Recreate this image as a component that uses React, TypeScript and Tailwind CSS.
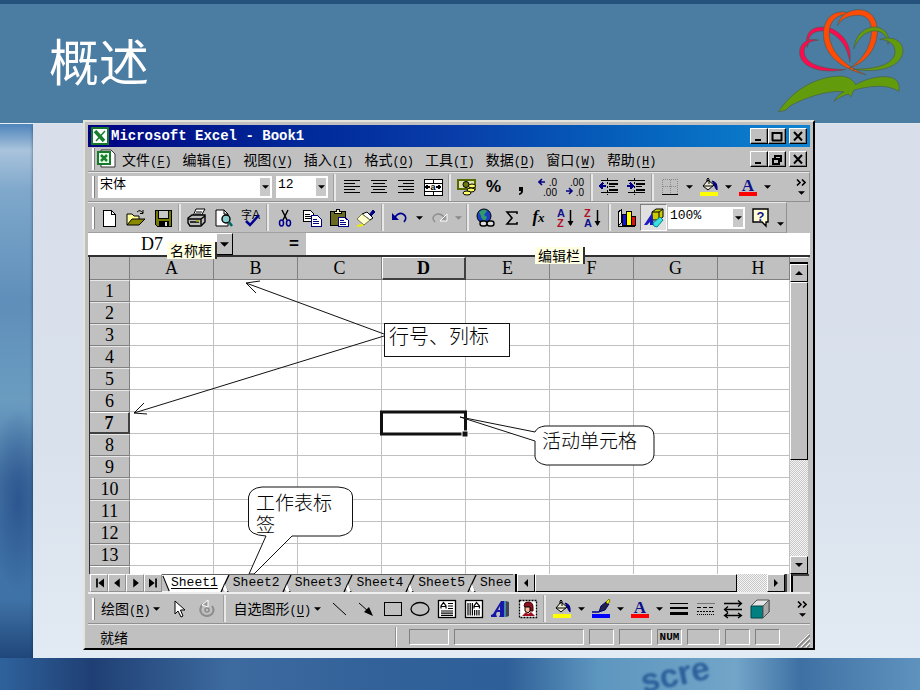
import React from "react";

const UI = "font-['Liberation_Mono','Noto_Sans_CJK_SC',monospace]";
const SERIF = "font-['Liberation_Serif','Noto_Sans_CJK_SC',serif]";
const CJK = "font-['Noto_Sans_CJK_SC',sans-serif]";
const RAISED = "border border-t-white border-l-white border-r-black border-b-black bg-[#c0c0c0]";
const SUNKEN = "border border-t-[#808080] border-l-[#808080] border-r-white border-b-white";

type IconProps = { children: React.ReactNode; soft?: boolean };
function Icon({ children, soft }: IconProps) {
  return (
    <svg viewBox="0 0 20 20" className="size-5 shrink-0" fill="none" stroke="#000" shapeRendering={soft ? "auto" : "crispEdges"}>
      {children}
    </svg>
  );
}

function Tool({ label, children, pressed }: { label: string; children: React.ReactNode; pressed?: boolean }) {
  return (
    <button
      type="button"
      aria-label={label}
      className={
        pressed
          ? "flex h-[27px] w-[27px] shrink-0 items-center justify-center border border-t-[#808080] border-l-[#808080] border-r-white border-b-white bg-[#e0e0e0]"
          : "flex h-[27px] w-[27px] shrink-0 items-center justify-center"
      }
    >
      {children}
    </button>
  );
}

function Drop({ label, dim }: { label: string; dim?: boolean }) {
  return (
    <button type="button" aria-label={label} className="flex h-[27px] w-3 shrink-0 items-center justify-center">
      <svg viewBox="0 0 8 4" className="h-1 w-[7px]">
        <path d="M0 0H8L4 4Z" fill={dim ? "#8a8a8a" : "#000"} />
      </svg>
    </button>
  );
}

const Sep = () => <span className="mx-[2px] h-[27px] w-[3px] shrink-0 border-l border-l-[#a0a0a0] bg-[#e8e8e8]" />;
const Grip = () => <span className="ml-1 h-[22px] w-[3px] shrink-0 border-r border-r-[#808080] bg-white" />;

function More() {
  return (
    <button type="button" aria-label="其他按钮" className="ml-auto mr-[2px] flex h-[24px] w-3 flex-col items-center justify-center gap-[5px]">
      <svg viewBox="0 0 10 6" className="h-[7px] w-[10px]" fill="none" stroke="#000" strokeWidth="1.6">
        <path d="M1 0L4 3L1 6M6 0L9 3L6 6" />
      </svg>
      <svg viewBox="0 0 8 4" className="h-1 w-[7px]">
        <path d="M0 0H8L4 4Z" />
      </svg>
    </button>
  );
}

function Combo({ label, value, width, offset }: { label: string; value: string; width: string; offset?: string }) {
  return (
    <div className={`flex h-[22px] shrink-0 items-stretch bg-white ${width} ${offset ?? ""}`}>
      <select aria-label={label} className={`min-w-0 flex-1 appearance-none bg-white pl-[2px] pb-1 text-[13px] leading-4 outline-none ${UI}`}>
        <option>{value}</option>
      </select>
      <span className="m-[2px] ml-0 flex w-[10px] items-center justify-center bg-[#c8c8c8]">
        <svg viewBox="0 0 8 4" className="h-1 w-[7px]">
          <path d="M0 0H8L4 4Z" />
        </svg>
      </span>
    </div>
  );
}

function WinButton({ label, d, gap }: { label: string; d: string; gap?: boolean }) {
  return (
    <button
      type="button"
      aria-label={label}
      className={`flex h-4 w-[18px] shrink-0 items-center justify-center shadow-[inset_-1px_-1px_0_#808080] ${RAISED} ${gap ? "ml-[3px]" : ""}`}
    >
      <svg viewBox="0 0 12 11" className="h-[11px] w-3" fill="none" stroke="#000" strokeWidth="2">
        <path d={d} />
      </svg>
    </button>
  );
}

const MIN = "M2 9H8";
const MAX = "M1 2H11M1.5 1V10M10.5 1V10M1 9.5H11";
const RESTORE = "M4 2H10V7H8M4 1V4M2 5H8V10H2V4";
const CLOSE = "M2 1L10 9.500M10 1L2 9.500";

const menus: [string, string][] = [
  ["文件", "F"],
  ["编辑", "E"],
  ["视图", "V"],
  ["插入", "I"],
  ["格式", "O"],
  ["工具", "T"],
  ["数据", "D"],
  ["窗口", "W"],
  ["帮助", "H"],
];

function MenuText({ text, hot }: { text: string; hot: string }) {
  return (
    <span className={`whitespace-nowrap text-[12px] leading-5 ${UI}`}>
      <span className="text-[14px]">{text}</span>(<u className="underline-offset-2">{hot}</u>)
    </span>
  );
}

const Bucket = () => (
  <Icon soft>
    <rect x="1" y="15" width="18" height="4" fill="#ff0" stroke="none" />
    <path d="M4 9L9 3L15 8L9 13Z" fill="#e8e8d0" />
    <path d="M8 5V2Q9 0 10 2V7M4 9H14" />
    <path d="M13 4Q19 5 18 13Q16 11 15 7Z" fill="#000080" stroke="#000080" />
  </Icon>
);

const FontColor = () => (
  <Icon>
    <rect x="1" y="15" width="18" height="4" fill="#f00" stroke="none" />
    <text x="10" y="14" textAnchor="middle" fontFamily="Liberation Serif" fontWeight="700" fontSize="17" fill="#10108a" stroke="none">
      A
    </text>
  </Icon>
);

function AlignIcon({ lines }: { lines: string }) {
  return (
    <Icon>
      <path d={lines} strokeWidth="1" transform="translate(0 .5)" />
    </Icon>
  );
}

function SortIcon({ top, bottom, topColor, bottomColor }: { top: string; bottom: string; topColor: string; bottomColor: string }) {
  return (
    <Icon soft>
      <g fontFamily="Liberation Sans" fontWeight="700" fontSize="11" stroke="none">
        <text x="1" y="9" fill={topColor}>{top}</text>
        <text x="1" y="19" fill={bottomColor}>{bottom}</text>
      </g>
      <path d="M14.500 2V17" strokeWidth="1.500" />
      <path d="M11.500 13H17.500L14.500 18Z" fill="#000" stroke="none" />
    </Icon>
  );
}

function DecimalIcon({ top, bottom, arrow }: { top: string; bottom: string; arrow: string }) {
  return (
    <Icon soft>
      <g fontFamily="Liberation Sans" fontSize="10" fill="#000" stroke="none">
        <text x="19" y="9" textAnchor="end">{top}</text>
        <text x="19" y="19" textAnchor="end">{bottom}</text>
      </g>
      <path d={arrow} stroke="#000080" strokeWidth="1.600" />
    </Icon>
  );
}

function FormatBar() {
  return (
    <div role="toolbar" aria-label="格式" className="flex h-[30px] items-center border-b border-b-[#909090] border-t border-t-[#e8e8e8] border-r border-r-[#909090]">
      <Grip />
      <Combo label="字体" value="宋体" width="w-[174px]" offset="ml-[3px]" />
      <Combo label="字号" value="12" width="w-[52px]" offset="ml-1 mr-[3px]" />
      <Sep />
      <Tool label="左对齐"><AlignIcon lines="M2 3H18M2 6H13M2 9H18M2 12H13M2 15H18" /></Tool>
      <Tool label="居中"><AlignIcon lines="M2 3H18M4 6H16M2 9H18M4 12H16M2 15H18" /></Tool>
      <Tool label="右对齐"><AlignIcon lines="M2 3H18M7 6H18M2 9H18M7 12H18M2 15H18" /></Tool>
      <Tool label="合并及居中">
        <Icon>
          <rect x="1" y="2" width="18" height="16" fill="#fff" />
          <path d="M1 6H19M1 14H19M10 2V6M10 14V18" />
          <path d="M2 10H7M13 10H18M4 8V12M16 8V12" strokeWidth="1.500" />
          <text x="10" y="13" textAnchor="middle" fontFamily="Liberation Sans" fontWeight="700" fontSize="9" fill="#000" stroke="none">a</text>
        </Icon>
      </Tool>
      <Sep />
      <Tool label="货币样式">
        <Icon soft>
          <rect x="1" y="3" width="17" height="9" fill="#e0e0b0" stroke="#556b00" strokeWidth="2" />
          <circle cx="9" cy="7.500" r="3" fill="#6b7a10" />
          <ellipse cx="15" cy="9" rx="3.500" ry="2" fill="#ff6" />
          <ellipse cx="14" cy="13" rx="4" ry="2" fill="#ff6" />
          <ellipse cx="10" cy="16" rx="4" ry="2" fill="#ff6" />
        </Icon>
      </Tool>
      <Tool label="百分比样式"><span className="font-['Liberation_Sans'] text-[17px] font-bold leading-5">%</span></Tool>
      <Tool label="千位分隔样式">
        <Icon soft><path d="M8 10H12V14Q12 17 8 18V16.500Q10 16 10 14H8Z" fill="#000" stroke="none" /></Icon>
      </Tool>
      <Tool label="增加小数位数"><DecimalIcon top=".0" bottom=".00" arrow="M1 5H7M4 2L1 5L4 8" /></Tool>
      <Tool label="减少小数位数"><DecimalIcon top=".00" bottom=".0" arrow="M1 14H7M4 11L7 14L4 17" /></Tool>
      <Sep />
      <Tool label="减少缩进量">
        <Icon>
          <path d="M2 3.500H19M10 9.500H16M2 15.500H19" />
          <path d="M10 6.500H19M10 12.500H19" strokeWidth="2" />
          <path d="M8.500 1V18" strokeDasharray="2 2" />
          <path d="M1 9H7M4 6L1 9L4 12" stroke="#000080" strokeWidth="1.500" />
        </Icon>
      </Tool>
      <Tool label="增加缩进量">
        <Icon>
          <path d="M2 3.500H19M10 9.500H16M2 15.500H19" />
          <path d="M10 6.500H19M10 12.500H19" strokeWidth="2" />
          <path d="M8.500 1V18" strokeDasharray="2 2" />
          <path d="M1 9H7M4 6L7 9L4 12" stroke="#000080" strokeWidth="1.500" />
        </Icon>
      </Tool>
      <Sep />
      <Tool label="边框">
        <Icon>
          <path d="M2.500 2.500H17.500V17M2.500 2.500V17M10 3V17M3 9.500H17" stroke="#888" strokeDasharray="1 1" />
          <path d="M2 17.500H18" />
        </Icon>
      </Tool>
      <Drop label="边框选项" />
      <Tool label="填充颜色"><Bucket /></Tool>
      <Drop label="填充颜色选项" />
      <Tool label="字体颜色"><FontColor /></Tool>
      <Drop label="字体颜色选项" />
      <More />
    </div>
  );
}

function StandardBar() {
  return (
    <div role="toolbar" aria-label="常用" className="mr-[23px] flex h-[31px] items-center border-r border-r-[#909090] border-b border-b-[#a0a0a0] border-t border-t-[#e8e8e8]">
      <Grip />
      <Tool label="新建"><Icon><path d="M4 2H12L16 6V18H4Z" fill="#fff" /><path d="M12 2V6H16" /></Icon></Tool>
      <Tool label="打开">
        <Icon soft>
          <path d="M1 17V6H6L8 8H13V11" fill="#ff9" />
          <path d="M1 17L6 11H19L13 17Z" fill="#8a8a00" />
          <path d="M11 4Q14 1 17 5M17 2V5.500H14" />
        </Icon>
      </Tool>
      <Tool label="保存">
        <Icon><path d="M2 2H18V18H4L2 16Z" fill="#777a00" /><rect x="5" y="2" width="10" height="8" fill="#c8c8c8" /><rect x="6" y="13" width="9" height="5" fill="#000" /><rect x="12" y="14" width="2" height="4" fill="#ddd" stroke="none" /></Icon>
      </Tool>
      <Sep />
      <Tool label="打印">
        <Icon soft>
          <path d="M6 8L9 1H18L14 8Z" fill="#fff" />
          <path d="M9 4H15M8 6H14" />
          <path d="M1 10L5 7H18V14L14 18H3L1 15Z" fill="#bbb" strokeWidth="1.400" />
          <path d="M1 11H14V17M14 11L18 8M3 14H12" strokeWidth="1.400" />
          <path d="M9 13H12" stroke="#aa0" strokeWidth="1.500" />
        </Icon>
      </Tool>
      <Tool label="打印预览">
        <Icon soft>
          <path d="M2 2H10L14 6V18H2Z" fill="#fff" />
          <path d="M10 2V6H14" />
          <circle cx="12" cy="11" r="4" fill="#8cc" strokeWidth="1.400" />
          <path d="M15 14L18 18" strokeWidth="2.500" stroke="#066" />
        </Icon>
      </Tool>
      <Tool label="拼写检查">
        <Icon soft>
          <g fill="#000" stroke="none">
            <text x="0" y="11" fontFamily="Noto Sans CJK SC" fontSize="11">字</text>
            <text x="11" y="11" fontFamily="Liberation Sans" fontSize="12">A</text>
          </g>
          <path d="M5 13L9 17L18 7" stroke="#000090" strokeWidth="2.500" />
        </Icon>
      </Tool>
      <Sep />
      <Tool label="剪切">
        <Icon soft>
          <path d="M7 2L12 12M13 2L8 12" strokeWidth="1.500" />
          <ellipse cx="6.500" cy="15" rx="2" ry="3" stroke="#000090" strokeWidth="1.500" />
          <ellipse cx="13.500" cy="15" rx="2" ry="3" stroke="#000090" strokeWidth="1.500" />
        </Icon>
      </Tool>
      <Tool label="复制">
        <Icon>
          <path d="M1 2H8L11 5V13H1Z" fill="#fff" /><path d="M3 6H8M3 8H9M3 10H9" />
          <path d="M9 7H15L19 11V18H9Z" fill="#fff" stroke="#000080" /><path d="M11 11H15M11 13H17M11 15H17" stroke="#000080" />
        </Icon>
      </Tool>
      <Tool label="粘贴">
        <Icon>
          <rect x="1" y="3" width="15" height="14" fill="#6a6a20" />
          <path d="M5 5V3H7V1H10V3H12V5Z" fill="#ffc" />
          <path d="M9 9H15L19 12V18H9Z" fill="#fff" stroke="#000080" /><path d="M11 12H15M11 14H17M11 16H17" stroke="#000080" />
        </Icon>
      </Tool>
      <Tool label="格式刷">
        <Icon soft>
          <path d="M13 7L17 2L19 4L15 8Z" fill="#000080" stroke="#000080" />
          <path d="M6 6L11 4L17 10L14 12Z" fill="#fff" />
          <path d="M6 6L1 11L8 17L14 12Z" fill="#ffc" stroke="#774" />
          <path d="M1 18L7 17" stroke="#ee0" strokeWidth="2" />
        </Icon>
      </Tool>
      <Sep />
      <Tool label="撤消">
        <Icon soft><path d="M5 9Q9 4 13 6Q18 9 14 14" stroke="#000090" strokeWidth="1.600" /><path d="M2 5V12H9Z" fill="#000090" stroke="none" /></Icon>
      </Tool>
      <Drop label="撤消列表" />
      <Tool label="恢复">
        <Icon soft><path d="M16 10Q11 4 6 7Q2 10 6 14" stroke="#8c8c8c" strokeWidth="1.400" /><path d="M18 6V13H11Z" fill="#999" stroke="#fff" /></Icon>
      </Tool>
      <Drop label="恢复列表" dim />
      <Sep />
      <Tool label="插入超链接">
        <Icon soft>
          <circle cx="9" cy="8" r="7" fill="#1b3fc0" />
          <path d="M4 4Q9 0 12 3L9 7L12 9L10 13Q6 11 6 8Z" fill="#2f9a6a" stroke="none" />
          <rect x="5" y="13" width="7" height="5" rx="2.500" fill="#ddd" strokeWidth="1.400" />
          <rect x="12" y="13" width="7" height="5" rx="2.500" fill="#ddd" strokeWidth="1.400" />
        </Icon>
      </Tool>
      <Tool label="自动求和"><Icon soft><path d="M15 6V4H5L10 10L5 16H15V14" strokeWidth="1.600" /></Icon></Tool>
      <Tool label="粘贴函数"><span className="font-['Liberation_Serif'] text-[17px] font-bold italic leading-5">f<span className="text-[13px]">x</span></span></Tool>
      <Tool label="升序排序"><SortIcon top="A" bottom="Z" topColor="#10108a" bottomColor="#b0102a" /></Tool>
      <Tool label="降序排序"><SortIcon top="Z" bottom="A" topColor="#b0102a" bottomColor="#10108a" /></Tool>
      <Sep />
      <Tool label="图表向导">
        <Icon>
          <path d="M1 4L4 2V15L1 18ZM1 18H18L19 15" fill="#eee" />
          <rect x="5" y="6" width="4" height="11" fill="#1010e0" />
          <rect x="9" y="3" width="5" height="14" fill="#ff0" />
          <rect x="14" y="8" width="4" height="9" fill="#e01010" />
        </Icon>
      </Tool>
      <Tool label="绘图" pressed>
        <Icon soft>
          <path d="M8 4L12 1H19V9L15 12H8Z" fill="#cc0" />
          <path d="M8 4H15V12M15 4L19 1" />
          <path d="M0 17L8 5L10 17H6V14L3 17Z" fill="#1a1ac0" stroke="none" />
          <path d="M9 15L16 9L19 12L13 19Q9 19 9 15Z" fill="#3de0e0" stroke="#088" />
        </Icon>
      </Tool>
      <Combo label="显示比例" value="100%" width="w-[77px]" offset="ml-[1px] mr-[2px]" />
      <Tool label="帮助">
        <Icon soft>
          <path d="M2 1H17V14H15V18L11 14H2Z" fill="#ffffd8" strokeWidth="1.400" />
          <text x="9.500" y="13" textAnchor="middle" fontFamily="Liberation Sans" fontWeight="700" fontSize="13" fill="#10108a" stroke="none">?</text>
        </Icon>
      </Tool>
      <span className="mt-3"><Drop label="更多按钮" /></span>
    </div>
  );
}

function DrawBar() {
  return (
    <div role="toolbar" aria-label="绘图工具" className="flex h-8 items-center border-t-2 border-t-[#efefef] border-b border-b-[#909090]">
      <Grip />
      <button type="button" className="ml-[6px]"><MenuText text="绘图" hot="R" /></button>
      <Drop label="绘图菜单" />
      <span className="w-1" />
      <Tool label="选择对象">
        <Icon soft><path d="M5 2V15L8 12L11 18L13 17L10.500 11H15Z" fill="#fff" /></Icon>
      </Tool>
      <Tool label="自由旋转">
        <Icon soft>
          <path d="M6 5Q1 10 5 15Q10 19 15 15Q18 11 15 7" stroke="#8c8c8c" strokeWidth="2" />
          <path d="M5 6L11 1V8Z" fill="#999" stroke="#fff" />
          <circle cx="10" cy="11" r="2" stroke="#8c8c8c" strokeWidth="1.500" />
        </Icon>
      </Tool>
      <Sep />
      <button type="button" className="ml-[6px]"><MenuText text="自选图形" hot="U" /></button>
      <Drop label="自选图形菜单" />
      <span className="w-[2px]" />
      <Tool label="直线"><Icon soft><path d="M4 4L17 16" /></Icon></Tool>
      <Tool label="箭头"><Icon soft><path d="M3 4L12 12" /><path d="M17 17L8 13L13 8Z" fill="#000" stroke="none" /></Icon></Tool>
      <Tool label="矩形"><Icon><rect x="1.500" y="3.500" width="17" height="13" /></Icon></Tool>
      <Tool label="椭圆"><Icon soft><ellipse cx="10" cy="10" rx="9" ry="6.500" strokeWidth="1.300" /></Icon></Tool>
      <Tool label="文本框">
        <Icon soft>
          <rect x="1.500" y="1.500" width="17" height="17" fill="#fff" strokeWidth="1.300" />
          <path d="M4 9.500V7L6.500 3.500L9 7V9.500M4.500 7.500H9M11 4.500H16M11 7H16M11 9.500H16M4 12H16M4 14.200H16M4 16.400H16" strokeWidth="1.200" />
        </Icon>
      </Tool>
      <Tool label="竖排文本框">
        <Icon soft>
          <rect x="1.500" y="1.500" width="17" height="17" fill="#fff" strokeWidth="1.300" />
          <path d="M10 9.500V7L12.500 3.500L15.500 7V9.500M10.500 7.500H15M4 4V16.500M6.200 4V16.500M8.400 4V16.500M10.600 11V16.500M12.800 11V16.500M15 11V16.500" strokeWidth="1.200" />
        </Icon>
      </Tool>
      <Tool label="艺术字">
        <Icon soft>
          <path d="M0 18V16L2 15L10 2H13V16L14 18H8L9 16V13H6L5 15L6 18ZM7 11H9V7Z" fill="#1818a8" stroke="none" fillRule="evenodd" />
          <path d="M15 2L18 3V17L15 18Z" fill="#445" stroke="none" />
          <path d="M13 2H15V18H13Z" fill="#48a" stroke="none" />
        </Icon>
      </Tool>
      <Tool label="剪贴画">
        <Icon soft>
          <rect x="1.500" y="1.500" width="17" height="17" fill="#fff" strokeDasharray="2 1" strokeWidth="1.300" />
          <path d="M6 7Q6 3 10 3Q15 3 15 8V12H12V9H8Z" fill="#8a1020" stroke="#400" />
          <path d="M7 8H12V12L10 14L7 12Z" fill="#fb9" />
          <path d="M4 17L8 13L10 15L13 13L17 17Z" fill="#a01020" stroke="none" />
        </Icon>
      </Tool>
      <Sep />
      <Tool label="填充色"><Bucket /></Tool>
      <Drop label="填充色选项" />
      <Tool label="线条颜色">
        <Icon soft>
          <rect x="1" y="15" width="18" height="4" fill="#00f" stroke="none" />
          <path d="M1 13H8" stroke="#000080" strokeWidth="1.500" />
          <path d="M8 13L10 7L15 3L18 5L14 11Z" fill="#224" stroke="#000080" />
          <path d="M15 3L18 0L19 2L17 5Z" fill="#ee0" stroke="#770" />
        </Icon>
      </Tool>
      <Drop label="线条颜色选项" />
      <Tool label="字体颜色"><FontColor /></Tool>
      <Drop label="字体颜色列表" />
      <Tool label="线型"><Icon><path d="M1 4.500H19" /><path d="M1 9H19" strokeWidth="2" /><path d="M1 14.500H19" strokeWidth="3" /></Icon></Tool>
      <Tool label="虚线线型">
        <Icon><path d="M1 4.500H19" stroke="#777" /><path d="M1 8.500H19" strokeDasharray="4 2" /><path d="M1 12.500H19" strokeDasharray="2 1" /><path d="M1 15.500H19" strokeDasharray="1 1" /></Icon>
      </Tool>
      <Tool label="箭头样式">
        <Icon soft><path d="M1 4.500H18M15 1.500L18.500 4.500L15 7.500M2 10.500H19M5 7.500L1.500 10.500L5 13.500M2 16.500H18M5 14L1.500 16.500L5 19M15 14L18.500 16.500L15 19" strokeWidth="1.300" /></Icon>
      </Tool>
      <Tool label="三维效果">
        <Icon soft><path d="M1 7L7 1H19V13L13 19Z" fill="#e4e4e4" stroke="#555" /><path d="M1 7H13V19H1Z" fill="#008080" stroke="#044" /><path d="M13 7L19 1V13L13 19Z" fill="#a8a8a8" stroke="#555" /></Icon>
      </Tool>
      <More />
    </div>
  );
}

const columns = ["A", "B", "C", "D", "E", "F", "G", "H"];
const rows = [1, 2, 3, 4, 5, 6, 7, 8, 9, 10, 11, 12, 13];

function Sheet() {
  return (
    <table className={`w-full table-fixed border-separate border-spacing-0 bg-white text-[18px] leading-none ${SERIF}`}>
      <colgroup>
        <col className="w-10" />
        {columns.slice(0, 7).map((c) => (
          <col key={c} className="w-[84px]" />
        ))}
        <col />
      </colgroup>
      <thead>
        <tr className="h-[23px]">
          <td className="border-r border-b border-[#808080] bg-[#c0c0c0] p-0" />
          {columns.map((c) => (
            <th
              key={c}
              scope="col"
              className={
                c === "D"
                  ? "border-r-2 border-b-2 border-t border-l border-t-white border-l-white border-[#404040] bg-[#c0c0c0] p-0 font-bold"
                  : `border-r border-b border-[#808080] bg-[#c0c0c0] p-0 font-normal ${c === "H" ? "pl-[9px]" : ""}`
              }
            >
              {c}
            </th>
          ))}
        </tr>
      </thead>
      <tbody>
        {rows.map((r) => (
          <tr key={r} className="h-[22px]">
            <th
              scope="row"
              className={
                r === 7
                  ? "border-r-2 border-b-2 border-t border-t-white border-[#404040] bg-[#c0c0c0] p-0 font-bold"
                  : "border-r border-b border-t border-t-[#e8e8e8] border-[#808080] bg-[#c0c0c0] p-0 font-normal"
              }
            >
              {r}
            </th>
            {columns.map((c) => (
              <td key={c} className="border-r border-b border-[#c0c0c0] p-0" />
            ))}
          </tr>
        ))}
        <tr className="h-2">
          <td className="border-r border-t border-t-white border-r-[#808080] bg-[#c0c0c0] p-0" />
          {columns.map((c) => (
            <td key={c} className="border-r border-[#c0c0c0] p-0" />
          ))}
        </tr>
      </tbody>
    </table>
  );
}

const DITHER = "bg-[repeating-conic-gradient(#c8c8c8_0_25%,#f4f4f4_0_50%)] bg-[length:2px_2px]";

function ArrowButton({ label, d, size }: { label: string; d: string; size: string }) {
  return (
    <button type="button" aria-label={label} className={`flex shrink-0 items-center justify-center ${RAISED} ${size}`}>
      <svg viewBox="0 0 8 8" className="size-2">
        <path d={d} />
      </svg>
    </button>
  );
}

function VScroll() {
  return (
    <div className="flex w-[18px] shrink-0 flex-col">
      <span className="h-[7px] border-t border-t-white border-b-2 border-b-black bg-[#c0c0c0]" />
      <ArrowButton label="向上滚动" d="M0 6H8L4 2Z" size="h-[18px] w-[18px]" />
      <span className={`h-[178px] ${RAISED}`} />
      <span className={`flex-1 ${DITHER}`} />
      <ArrowButton label="向下滚动" d="M0 2H8L4 6Z" size="h-[18px] w-[18px]" />
    </div>
  );
}

function TabStrip() {
  const nav: [string, string][] = [
    ["第一张", "M1 0H2.500V8H1ZM8 0V8L3 4Z"],
    ["上一张", "M6 0V8L1 4Z"],
    ["下一张", "M2 0V8L7 4Z"],
    ["最后一张", "M0 0V8L5 4ZM5.500 0H7V8H5.500Z"],
  ];
  return (
    <div className="ml-[2px] flex h-[18px] items-stretch bg-[#c0c0c0]">
      {nav.map(([label, d]) => (
        <button key={label} type="button" aria-label={label} className="flex w-[18px] shrink-0 items-center justify-center border border-t-white border-l-white border-r-[#909090] border-b-[#909090]">
          <svg viewBox="0 0 8 8" className="h-[10px] w-[9px]">
            <path d={d} />
          </svg>
        </button>
      ))}
      <div role="tablist" aria-label="工作表" className={`flex w-[351px] shrink-0 overflow-hidden border-t border-t-[#606060] text-[13px] leading-4 ${UI}`}>
        {["Sheet1", "Sheet2", "Sheet3", "Sheet4", "Sheet5", "Shee"].map((name, i) => (
          <button
            key={name}
            type="button"
            role="tab"
            aria-selected={i === 0}
            className={i === 0 ? "flex h-[17px] shrink-0 items-stretch bg-white" : "flex h-[17px] shrink-0 items-stretch"}
          >
            {i === 0 && (
              <svg viewBox="0 0 10 17" className="h-[17px] w-[9px]">
                <path d="M0 0V17H8Z" fill="#c0c0c0" />
                <path d="M1 0L8 17" stroke="#000" strokeWidth="1.300" />
              </svg>
            )}
            <span className={i === 0 ? "underline decoration-1 underline-offset-2" : ""}>{name}</span>
            {i < 5 && (
              <svg viewBox="0 0 15 17" className="h-[17px] w-[15px]">
                <path d="M10 0L3 17H15V0Z" fill="#c0c0c0" />
                <path d="M11 0L3 17M6 9L10 17" stroke="#000" strokeWidth="1.300" fill="none" />
                <path d="M7 9L10 16L7 17L5 14Z" fill="#fff" />
              </svg>
            )}
          </button>
        ))}
      </div>
      <span className="w-1 shrink-0 border-r-2 border-r-black" />
      <ArrowButton label="向左滚动" d="M6 0V8L2 4Z" size="w-[18px]" />
      <span className={`min-w-0 flex-[200_1_0] ${RAISED}`} />
      <span className={`min-w-0 flex-[30_1_0] ${DITHER}`} />
      <ArrowButton label="向右滚动" d="M2 0V8L6 4Z" size="w-[18px]" />
      <span className="w-[6px] shrink-0 border-l-2 border-l-[#404040] border-r border-r-white" />
      <span className="w-[18px] shrink-0 border-l-2 border-l-black border-t-2 border-t-[#404040]" />
    </div>
  );
}

function FormulaBar() {
  return (
    <div className="flex h-6 items-stretch border-b-2 border-b-[#303030]">
      <input aria-label="名称框" defaultValue="D7" className={`w-[128px] bg-white text-center text-[18px] leading-5 outline-none ${SERIF}`} />
      <button type="button" aria-label="名称列表" className={`flex w-[17px] items-center justify-center ${RAISED}`}>
        <svg viewBox="0 0 8 4" className="h-[5px] w-[9px]">
          <path d="M0 0H8L4 4Z" />
        </svg>
      </button>
      <button type="button" aria-label="编辑公式" className="flex w-[74px] items-center justify-end border-r border-r-white pr-[7px] font-['Liberation_Sans'] text-[17px] font-bold leading-5">
        =
      </button>
      <input aria-label="编辑栏" className="min-w-0 flex-1 bg-white outline-none" />
    </div>
  );
}

function Annotations() {
  return (
    <div className={`pointer-events-none absolute top-0 left-0 h-[341px] w-[722px] ${CJK}`}>
      <svg viewBox="88 233 722 341" className="absolute inset-0 h-[341px] w-[722px]" fill="none" stroke="#111">
        <path d="M384 334L246 283M260 281L246 283L256 293M384 336L134 413M144 403L134 413L147 414" />
        <rect x="381.500" y="412" width="84" height="22" strokeWidth="3" />
        <rect x="462" y="431" width="6" height="6" fill="#111" stroke="#fff" />
        <rect x="384.500" y="323.500" width="125" height="33" fill="#fff" />
        <path d="M545 426H644Q654 427 654 436V455Q653 463 643 465H546Q536 463 535 457V441L460 417L535 432Q537 427 545 426Z" fill="#fff" />
        <path d="M262 487H338Q352 488 352.500 496V526Q352 534 340 536H292L254 574H249L266 536Q249 535 248.500 526V497Q250 488 262 487Z" fill="#fff" />
      </svg>
      <span className="absolute top-[91px] left-[301px] text-[20px] font-light leading-6">行号、列标</span>
      <span className="absolute top-[195px] left-[454px] text-[19px] font-light leading-6">活动单元格</span>
      <span className="absolute top-[258px] left-[168px] w-[80px] text-[19px] font-light leading-[22px]">工作表标签</span>
      <span className="absolute top-[9px] left-[79px] border-r-2 border-r-[#303030] bg-[#ffffe1] px-[3px] text-[14px] leading-[17px]">名称框</span>
      <span className="absolute top-[14px] left-[447px] border-r-2 border-r-[#303030] bg-[#ffffe1] px-[3px] text-[14px] leading-[17px]">编辑栏</span>
    </div>
  );
}

function StatusBar() {
  return (
    <div className="flex h-6 items-center border-t border-t-[#e8e8e8] pl-3">
      <span className={`flex-1 text-[14px] leading-5 ${CJK}`}>就绪</span>
      <span className="mr-3 h-5 w-[2px] border-l border-l-[#909090] bg-white" />
      <div className="flex h-4 gap-[5px]">
        <span className={`w-10 ${SUNKEN}`} />
        <span className={`w-[130px] ${SUNKEN}`} />
        <span className={`w-[25px] ${SUNKEN}`} />
        <span className={`w-[33px] ${SUNKEN}`} />
        <span className={`w-[25px] text-center text-[11px] font-bold leading-[14px] ${UI} ${SUNKEN}`}>NUM</span>
        <span className={`w-[33px] ${SUNKEN}`} />
        <span className={`w-[25px] ${SUNKEN}`} />
        <span className={`w-[25px] ${SUNKEN}`} />
      </div>
      <svg viewBox="0 0 14 14" className="ml-4 size-[14px] self-end" stroke="#808080" strokeWidth="1.500">
        <path d="M1 14L14 1M6 14L14 6M11 14L14 11" />
        <path d="M0 13L13 0M5 13L14 4M10 13L14 9" stroke="#fff" strokeWidth="1" />
      </svg>
    </div>
  );
}

function ExcelWindow() {
  return (
    <section
      aria-label="Microsoft Excel"
      className="relative -mt-1 border-2 border-t-[#e4e4dc] border-l-[#e4e4dc] border-r-black border-b-black bg-[#c0c0c0] px-[3px] pt-[3px] text-black"
    >
      <div className="flex h-[22px] items-center bg-linear-to-r from-[#000082] via-[#0a3ca8] to-[#1084d0] pr-[3px] pl-[3px]">
        <svg viewBox="0 0 18 18" className="mr-[2px] h-[18px] w-[18px]">
          <rect x="1" y="1" width="16" height="16" fill="#fff" stroke="#177a2b" strokeWidth="2" />
          <path d="M4 4L13 14" stroke="#17802e" strokeWidth="3.500" />
          <path d="M14 4L5 14" stroke="#17802e" strokeWidth="1.500" />
        </svg>
        <span className={`flex-1 whitespace-nowrap text-[14px] font-bold leading-5 text-white ${UI}`}>Microsoft Excel - Book1</span>
        <WinButton label="最小化" d={MIN} />
        <WinButton label="最大化" d={MAX} />
        <WinButton label="关闭" d={CLOSE} gap />
      </div>
      <nav aria-label="菜单栏" className="flex h-[25px] items-center border-b border-b-[#909090] pr-[3px]">
        <Grip />
        <svg viewBox="0 0 20 20" className="mr-[6px] ml-[1px] h-5 w-5">
          <path d="M5 1H15L19 5V18H5Z" fill="#fff" stroke="#333" />
          <rect x="2" y="3" width="12" height="12" fill="#e8ffe8" stroke="#177a2b" strokeWidth="2" />
          <path d="M5 6L11 12M11 6L5 12" stroke="#17802e" strokeWidth="2.500" />
        </svg>
        <div className="flex flex-1 gap-[11px]">
          {menus.map(([text, hot]) => (
            <button key={hot} type="button">
              <MenuText text={text} hot={hot} />
            </button>
          ))}
        </div>
        <WinButton label="最小化窗口" d={MIN} />
        <WinButton label="还原窗口" d={RESTORE} />
        <WinButton label="关闭窗口" d={CLOSE} gap />
      </nav>
      <FormatBar />
      <StandardBar />
      <div className="relative">
        <FormulaBar />
        <div className="ml-[1px] flex border-l border-l-[#303030] pr-[2px]">
          <div className="min-w-0 flex-1 overflow-hidden">
            <Sheet />
          </div>
          <VScroll />
        </div>
        <Annotations />
      </div>
      <div className="pr-[1px]">
        <TabStrip />
      </div>
      <DrawBar />
      <StatusBar />
    </section>
  );
}

function Logo() {
  return (
    <svg viewBox="15 20 400 325" className="mt-[3px] h-[108px] w-[133px] shrink-0" role="img" aria-label="标志">
      <g stroke="#4a5a50" strokeWidth="2">
        <g fill="#ff0a50">
          <path d="M112 142C103 105 120 78 160 80L168 93C135 88 116 104 117 122Z" />
          <path d="M178 82C220 98 248 135 240 186C234 145 212 110 178 96Z" />
          <path d="M146 120C108 110 84 135 90 166C98 203 155 222 228 208C165 208 108 195 103 158C101 135 118 120 146 120Z" />
        </g>
        <g fill="#ff4b05">
          <path d="M238 38C198 26 164 48 161 95C158 155 200 202 289 224C235 202 180 160 178 100C177 62 203 40 238 42Z" />
          <path d="M203 76C208 45 240 27 270 28C310 30 325 65 323 100C318 150 290 185 238 205C280 178 303 140 305 95C306 60 290 45 265 45C235 45 215 55 203 76Z" />
        </g>
        <g fill="#629c0c">
          <path d="M252 146C256 105 282 79 318 80C345 83 362 104 355 133C352 108 340 92 315 92C285 93 265 115 252 146Z" />
          <path d="M330 118C365 105 400 120 400 152C398 197 335 222 250 207C325 208 375 190 376 155C376 130 355 118 330 118Z" />
          <path d="M25 336C60 280 130 228 215 228C240 230 255 245 257 254C290 235 330 225 365 232C385 240 390 250 388 274C350 250 300 258 252 270L244 290L236 282C220 286 205 295 192 304C200 290 210 280 222 275C170 268 90 300 60 318L48 330Z" />
        </g>
      </g>
    </svg>
  );
}

export default function App() {
  return (
    <div className="flex min-h-screen flex-col overflow-hidden bg-[#3f70a4] bg-[radial-gradient(ellipse_30px_90px_at_18px_500px,rgba(35,75,135,0.75),transparent),linear-gradient(180deg,#4d84bb_124px,#a9c3dc_150px,#7fa8cb_190px,#5f8fba_300px,#6a9cc0_400px,#4775a6_480px,#3f72a6_560px,#3f72a6_600px,#1f4579_660px)]">
      <header className="flex h-[124px] justify-between border-t-4 border-t-[#24527c] border-b border-b-[#e8eef4] bg-[#4b7da3] pr-[12px] pl-[49px]">
        <h1 className={`mt-[26px] text-[50px] font-normal leading-[58px] text-white ${CJK}`}>概述</h1>
        <Logo />
      </header>
      <main className="ml-[33px] bg-[#dbe3ee] bg-[linear-gradient(180deg,#d8dfea,#d9e1ec_60%,#e2ebf4)] pr-[105px] pb-2 pl-[50px] shadow-[0_2px_3px_rgba(10,30,60,0.6)]">
        <ExcelWindow />
      </main>
      <footer className="flex min-h-8 flex-1 justify-end overflow-hidden bg-[linear-gradient(90deg,#2f629c,#1f3f74_10%,#3d6ba0_25%,#33629a_40%,#2e5f98_55%,#5d96bf_65%,#72a5c8_80%,#3f70a4_87%,#5f93be)]">
        <span aria-hidden="true" className="mr-[210px] -rotate-12 font-['Liberation_Sans'] text-[34px] font-bold leading-8 text-[#2b5f9a] blur-[1px]">
          scre
        </span>
      </footer>
    </div>
  );
}
